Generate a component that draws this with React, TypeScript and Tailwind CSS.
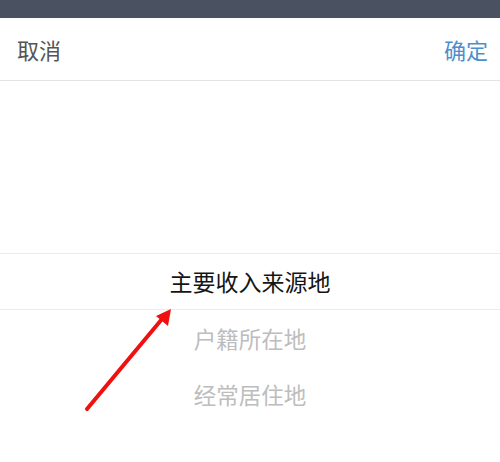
const font = { fontFamily: '"Noto Sans CJK SC", "Noto Sans", sans-serif' }

const options = ['户籍所在地', '经常居住地']

export default function App() {
  return (
    <div className="relative w-[500px] h-[462px] bg-white overflow-hidden" style={font}>
      <div className="h-[18px] bg-[#4a5161]" />
      <div className="h-[63px] flex items-center justify-between pl-[17px] pr-[12px] border-b border-[#e3e3e3]">
        <span className="text-[22px] text-[#555] leading-none">取消</span>
        <span className="text-[22px] text-[#4d8fcc] leading-none">确定</span>
      </div>

      <div className="pt-[172px]">
        <div className="h-[57px] flex items-center justify-center border-y border-[#ebebeb]">
          <span className="text-[23px] text-[#151515] leading-none">主要收入来源地</span>
        </div>
        {options.map(o => (
          <div key={o} className="h-[56px] flex items-center justify-center">
            <span className="text-[22.5px] text-[#bdbdbd] leading-none">{o}</span>
          </div>
        ))}
      </div>

      <svg className="absolute left-0 top-0" width="500" height="462" viewBox="0 0 500 462">
        <line x1="87" y1="409" x2="162" y2="319" stroke="#f01010" strokeWidth="4" strokeLinecap="round" />
        <polygon points="171,309 156,316 168,326" fill="#f01010" />
      </svg>
    </div>
  )
}
